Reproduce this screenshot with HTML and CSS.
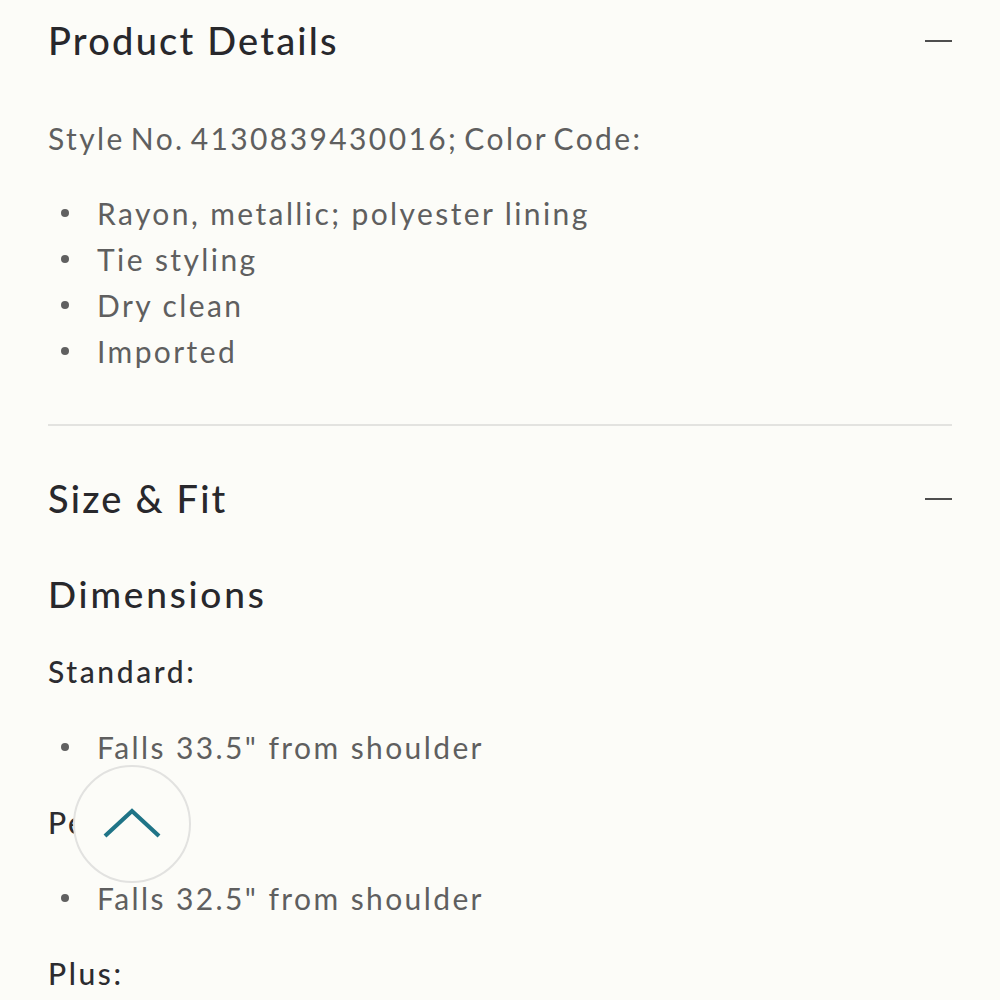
FILE: index.html
```html
<!DOCTYPE html>
<html lang="en">
<head>
<meta charset="utf-8">
<title>Product Details</title>
<link rel="stylesheet" href="styles.css">
</head>
<body>
<main class="page">
  <section class="acc">
    <header class="acc-head">
      <h2 class="acc-title">Product Details</h2>
      <span class="minus" aria-hidden="true"></span>
    </header>
    <p class="style-no">Style No. 4130839430016; Color Code:</p>
    <ul class="bullets first">
      <li>Rayon, metallic; polyester lining</li>
      <li>Tie styling</li>
      <li>Dry clean</li>
      <li>Imported</li>
    </ul>
  </section>
  <hr class="divider">
  <section class="acc">
    <header class="acc-head">
      <h2 class="acc-title">Size &amp; Fit</h2>
      <span class="minus" aria-hidden="true"></span>
    </header>
    <h3 class="dims">Dimensions</h3>
    <h4 class="fit">Standard:</h4>
    <ul class="bullets">
      <li>Falls 33.5" from shoulder</li>
    </ul>
    <h4 class="fit">Petite:</h4>
    <ul class="bullets">
      <li>Falls 32.5" from shoulder</li>
    </ul>
    <h4 class="fit">Plus:</h4>
  </section>
</main>
<button class="to-top" aria-label="Back to top">
  <svg width="60" height="34" viewBox="0 0 60 34">
    <path d="M3 29 L30 4 L57 29" fill="none" stroke="#1f7487" stroke-width="4.2" stroke-linecap="butt" stroke-linejoin="miter"/>
  </svg>
</button>
</body>
</html>
```
FILE: styles.css
```css
html, body {
  margin: 0;
  padding: 0;
  background: #fcfcf8;
}
body {
  font-family: Lato, "Noto Sans", "Liberation Sans", sans-serif;
  position: relative;
  height: 1000px;
  overflow: hidden;
}
.page {
  padding: 0 48px;
}
.acc-head {
  display: flex;
  align-items: center;
  justify-content: space-between;
  height: 80px;
}
.acc-title {
  margin: 0;
  font-size: 38px;
  font-weight: 500;
  letter-spacing: 2.2px;
  color: #28282c;
  line-height: 78px;
}
.minus {
  width: 27px;
  height: 2px;
  background: #4e4e4e;
  margin-top: 2px;
}
.style-no {
  margin: 35px 0 0;
  font-size: 30px;
  line-height: 46px;
  letter-spacing: 2.4px;
  color: #5f5f5f;
  word-spacing: -4px;
}
.bullets {
  list-style: none;
  margin: 30px 0 0;
  padding: 0;
}
.bullets.first {
  margin-top: 29px;
}
.bullets li {
  display: flex;
  align-items: center;
  font-size: 30px;
  line-height: 46px;
  letter-spacing: 2.4px;
  color: #5f5f5f;
}
.bullets li::before {
  content: "";
  width: 8px;
  height: 8px;
  border-radius: 50%;
  background: #606060;
  margin-left: 13px;
  margin-right: 28px;
  flex: none;
}
.divider {
  border: 0;
  height: 2px;
  background: #e3e3e0;
  margin: 50px 0 32px;
}
.dims {
  margin: 31px 0 0;
  font-size: 37px;
  font-weight: 500;
  letter-spacing: 2.8px;
  line-height: 50px;
  color: #28282c;
}
.fit {
  margin: 29px 0 0;
  font-size: 30px;
  font-weight: 500;
  letter-spacing: 2.6px;
  line-height: 46px;
  color: #2c2c30;
}
.to-top {
  position: absolute;
  left: 73px;
  top: 765px;
  width: 118px;
  height: 118px;
  border-radius: 50%;
  border: 2px solid #e2e2e0;
  background: #fcfcf8;
  padding: 0;
  display: flex;
  align-items: center;
  justify-content: center;
}
.to-top svg {
  display: block;
  margin-top: 0;
}
```
